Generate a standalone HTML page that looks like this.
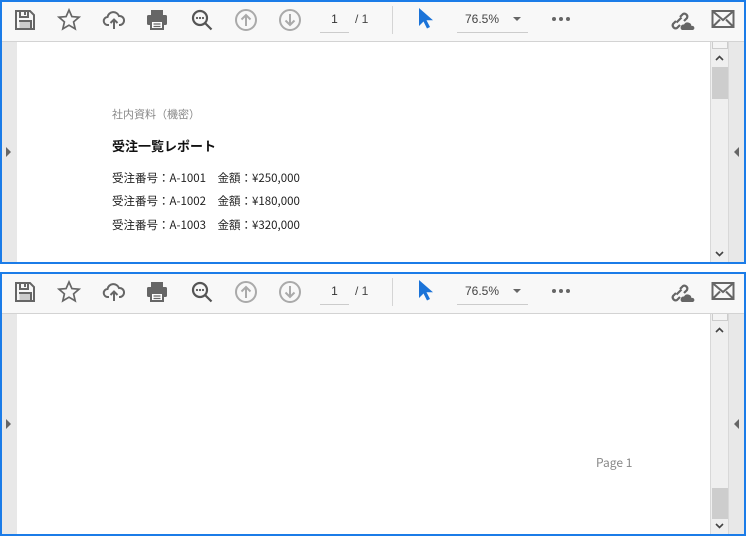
<!DOCTYPE html>
<html><head><meta charset="utf-8"><style>
*{margin:0;padding:0;box-sizing:border-box}
body{width:746px;height:536px;background:#fff;position:relative;overflow:hidden;font-family:"Liberation Sans","Noto Sans CJK JP",sans-serif}
.pane{position:absolute;left:0;width:746px;border:2px solid #1b7ce8;background:#fff;overflow:hidden}
.tb{position:absolute;left:0;top:0;width:742px;height:40px;background:#f8f8f8;border-bottom:1px solid #d3d3d3}
.ic{position:absolute;top:6px}
.lg{position:absolute;left:0;top:40px;width:15px;bottom:0;background:#e8e8e8}
.rg{position:absolute;right:0;top:40px;width:15px;bottom:0;background:#e8e8e8}
.sb{position:absolute;right:15px;top:40px;width:19px;bottom:0;background:#efefef;border-left:1px solid #d8d8d8;border-right:1px solid #d8d8d8}
.tri{position:absolute;width:0;height:0;border-top:5px solid transparent;border-bottom:5px solid transparent}
.t{position:absolute;font-size:11.5px;color:#222;white-space:nowrap;font-family:"Noto Sans CJK JP","Liberation Sans",sans-serif}
.ar{position:absolute;left:4px}
.dots span{position:absolute;top:0;width:4px;height:4px;border-radius:50%;background:#666}
</style></head><body>

<div class="pane" style="top:0;height:264px">
 <div class="tb">
  <svg class="ic" style="left:11px" width="24" height="24" viewBox="0 0 24 24" fill="none" stroke="#666" stroke-width="2"><path d="M3 3h14l4 4v14H3z"/><path d="M7 3v6h8V3M12 4v3"/><rect x="6.5" y="14" width="11" height="6" fill="#ccc" stroke="none"/><path d="M6 13h12v8"/></svg>
  <svg class="ic" style="left:55px" width="24" height="24" viewBox="0 0 24 24" fill="none" stroke="#666" stroke-width="1.7"><path d="M12 2l2.9 6.6 7.1.6-5.4 4.7 1.6 7-6.2-3.7-6.2 3.7 1.6-7L2 9.2l7.1-.6z"/></svg>
  <svg class="ic" style="left:100px" width="24" height="24" viewBox="0 0 24 24" fill="none" stroke="#666" stroke-width="2"><path d="M7 17H6a4 4 0 0 1-.5-8A6 6 0 0 1 17 8a4.5 4.5 0 0 1 1 9h-1"/><path d="M12 21v-9M8.5 15l3.5-3.5 3.5 3.5"/></svg>
  <svg class="ic" style="left:143px" width="24" height="24" viewBox="0 0 24 24"><rect x="6" y="2" width="12" height="5" fill="#666"/><rect x="2" y="7" width="20" height="10" rx="1.5" fill="#666"/><rect x="6" y="13" width="12" height="8" fill="#fff" stroke="#666" stroke-width="2"/><path d="M8.5 16h7M8.5 18.5h7" stroke="#666" stroke-width="1.3"/></svg>
  <svg class="ic" style="left:188px" width="24" height="24" viewBox="0 0 24 24" fill="none" stroke="#555" stroke-width="2.2"><circle cx="10" cy="10" r="7"/><path d="M15 15l6.5 6.5"/><g fill="#555" stroke="none"><circle cx="7" cy="10" r="1.1"/><circle cx="10" cy="10" r="1.1"/><circle cx="13" cy="10" r="1.1"/></g></svg>
  <svg class="ic" style="left:232px" width="24" height="24" viewBox="0 0 24 24" fill="none" stroke="#aaa" stroke-width="2"><circle cx="12" cy="12" r="10"/><path d="M12 18V7M7.5 11.5 12 7l4.5 4.5"/></svg>
  <svg class="ic" style="left:276px" width="24" height="24" viewBox="0 0 24 24" fill="none" stroke="#aaa" stroke-width="2"><circle cx="12" cy="12" r="10"/><path d="M12 6v11M7.5 12.5 12 17l4.5-4.5"/></svg>
  <div style="position:absolute;left:318px;top:8px;width:29px;height:23px;border-bottom:1px solid #ccc;text-align:center;font-size:12px;color:#333;line-height:18px">1</div>
  <div style="position:absolute;left:353px;top:8px;font-size:12px;color:#444;line-height:18px">/ 1</div>
  <div style="position:absolute;left:390px;top:4px;width:1px;height:28px;background:#d5d5d5"></div>
  <svg class="ic" style="left:415px;top:5px" width="18" height="24" viewBox="0 0 18 24"><path d="M2 1v18l4.5-4.5 3.5 7 3-1.5-3.5-6.8H16z" fill="#1b73d8"/></svg>
  <div style="position:absolute;left:455px;top:8px;width:71px;height:23px;border-bottom:1px solid #ccc;font-size:12px;color:#444;line-height:18px;padding-left:8px">76.5%</div>
  <div style="position:absolute;left:511px;top:15px;border-left:4px solid transparent;border-right:4px solid transparent;border-top:4px solid #666"></div>
  <div class="dots" style="position:absolute;left:550px;top:15px;width:20px;height:4px"><span style="left:0"></span><span style="left:7px"></span><span style="left:14px"></span></div>
  <svg class="ic" style="left:665px" width="28" height="24" viewBox="0 0 28 24" fill="none" stroke="#666" stroke-width="2.2"><path d="M9 13l-3 3a3 3 0 0 0 4 4l3-3M13 9l3-3a3 3 0 0 1 4 4l-3 3M9.5 14.5l5-5"/><path d="M15 22a3 3 0 0 1 2-5.5 4 4 0 0 1 7.5 1.5A2 2 0 0 1 26 22z" fill="#666" stroke="none"/></svg>
  <svg class="ic" style="left:709px;top:7px" width="24" height="20" viewBox="0 0 24 20" fill="none" stroke="#666" stroke-width="2"><rect x="1.5" y="2" width="21" height="16"/><path d="M1.5 2 12 11 22.5 2M1.5 18 9 10.5M22.5 18 15 10.5"/></svg>
 </div>
 <div class="lg"><div class="tri" style="left:4px;top:105px;border-left:5px solid #666"></div></div>
 <div class="sb"><div style="position:absolute;left:1px;top:0;width:16px;height:7px;background:#f4f4f4;border:1px solid #ccc;border-top:0"></div>
  <svg class="ar" style="top:13px" width="9" height="6" viewBox="0 0 9 6"><path d="M1 5 4.5 1.5 8 5" fill="none" stroke="#444" stroke-width="1.6"/></svg>
  <div style="position:absolute;left:1px;top:25px;width:16px;height:32px;background:#cdcdcd"></div>
  <svg class="ar" style="bottom:5px" width="9" height="6" viewBox="0 0 9 6"><path d="M1 1 4.5 4.5 8 1" fill="none" stroke="#444" stroke-width="1.6"/></svg></div>
 <div class="rg"><div class="tri" style="left:5px;top:105px;border-right:5px solid #666"></div></div>
 <div class="t" style="left:110px;top:104px;font-size:11px;color:#888">社内資料（機密）</div>
 <div class="t" style="left:110px;top:134px;font-size:13px;font-weight:bold;color:#111">受注一覧レポート</div>
 <div class="t" style="left:110px;top:168px">受注番号：A-1001　金額：¥250,000</div>
 <div class="t" style="left:110px;top:191px">受注番号：A-1002　金額：¥180,000</div>
 <div class="t" style="left:110px;top:215px">受注番号：A-1003　金額：¥320,000</div>
</div>

<div class="pane" style="top:272px;height:264px">
 <div class="tb">
  <svg class="ic" style="left:11px" width="24" height="24" viewBox="0 0 24 24" fill="none" stroke="#666" stroke-width="2"><path d="M3 3h14l4 4v14H3z"/><path d="M7 3v6h8V3M12 4v3"/><rect x="6.5" y="14" width="11" height="6" fill="#ccc" stroke="none"/><path d="M6 13h12v8"/></svg>
  <svg class="ic" style="left:55px" width="24" height="24" viewBox="0 0 24 24" fill="none" stroke="#666" stroke-width="1.7"><path d="M12 2l2.9 6.6 7.1.6-5.4 4.7 1.6 7-6.2-3.7-6.2 3.7 1.6-7L2 9.2l7.1-.6z"/></svg>
  <svg class="ic" style="left:100px" width="24" height="24" viewBox="0 0 24 24" fill="none" stroke="#666" stroke-width="2"><path d="M7 17H6a4 4 0 0 1-.5-8A6 6 0 0 1 17 8a4.5 4.5 0 0 1 1 9h-1"/><path d="M12 21v-9M8.5 15l3.5-3.5 3.5 3.5"/></svg>
  <svg class="ic" style="left:143px" width="24" height="24" viewBox="0 0 24 24"><rect x="6" y="2" width="12" height="5" fill="#666"/><rect x="2" y="7" width="20" height="10" rx="1.5" fill="#666"/><rect x="6" y="13" width="12" height="8" fill="#fff" stroke="#666" stroke-width="2"/><path d="M8.5 16h7M8.5 18.5h7" stroke="#666" stroke-width="1.3"/></svg>
  <svg class="ic" style="left:188px" width="24" height="24" viewBox="0 0 24 24" fill="none" stroke="#555" stroke-width="2.2"><circle cx="10" cy="10" r="7"/><path d="M15 15l6.5 6.5"/><g fill="#555" stroke="none"><circle cx="7" cy="10" r="1.1"/><circle cx="10" cy="10" r="1.1"/><circle cx="13" cy="10" r="1.1"/></g></svg>
  <svg class="ic" style="left:232px" width="24" height="24" viewBox="0 0 24 24" fill="none" stroke="#aaa" stroke-width="2"><circle cx="12" cy="12" r="10"/><path d="M12 18V7M7.5 11.5 12 7l4.5 4.5"/></svg>
  <svg class="ic" style="left:276px" width="24" height="24" viewBox="0 0 24 24" fill="none" stroke="#aaa" stroke-width="2"><circle cx="12" cy="12" r="10"/><path d="M12 6v11M7.5 12.5 12 17l4.5-4.5"/></svg>
  <div style="position:absolute;left:318px;top:8px;width:29px;height:23px;border-bottom:1px solid #ccc;text-align:center;font-size:12px;color:#333;line-height:18px">1</div>
  <div style="position:absolute;left:353px;top:8px;font-size:12px;color:#444;line-height:18px">/ 1</div>
  <div style="position:absolute;left:390px;top:4px;width:1px;height:28px;background:#d5d5d5"></div>
  <svg class="ic" style="left:415px;top:5px" width="18" height="24" viewBox="0 0 18 24"><path d="M2 1v18l4.5-4.5 3.5 7 3-1.5-3.5-6.8H16z" fill="#1b73d8"/></svg>
  <div style="position:absolute;left:455px;top:8px;width:71px;height:23px;border-bottom:1px solid #ccc;font-size:12px;color:#444;line-height:18px;padding-left:8px">76.5%</div>
  <div style="position:absolute;left:511px;top:15px;border-left:4px solid transparent;border-right:4px solid transparent;border-top:4px solid #666"></div>
  <div class="dots" style="position:absolute;left:550px;top:15px;width:20px;height:4px"><span style="left:0"></span><span style="left:7px"></span><span style="left:14px"></span></div>
  <svg class="ic" style="left:665px" width="28" height="24" viewBox="0 0 28 24" fill="none" stroke="#666" stroke-width="2.2"><path d="M9 13l-3 3a3 3 0 0 0 4 4l3-3M13 9l3-3a3 3 0 0 1 4 4l-3 3M9.5 14.5l5-5"/><path d="M15 22a3 3 0 0 1 2-5.5 4 4 0 0 1 7.5 1.5A2 2 0 0 1 26 22z" fill="#666" stroke="none"/></svg>
  <svg class="ic" style="left:709px;top:7px" width="24" height="20" viewBox="0 0 24 20" fill="none" stroke="#666" stroke-width="2"><rect x="1.5" y="2" width="21" height="16"/><path d="M1.5 2 12 11 22.5 2M1.5 18 9 10.5M22.5 18 15 10.5"/></svg>
 </div>
 <div class="lg"><div class="tri" style="left:4px;top:105px;border-left:5px solid #666"></div></div>
 <div class="sb"><div style="position:absolute;left:1px;top:0;width:16px;height:7px;background:#f4f4f4;border:1px solid #ccc;border-top:0"></div>
  <svg class="ar" style="top:13px" width="9" height="6" viewBox="0 0 9 6"><path d="M1 5 4.5 1.5 8 5" fill="none" stroke="#444" stroke-width="1.6"/></svg>
  <div style="position:absolute;left:1px;top:174px;width:16px;height:31px;background:#cdcdcd"></div>
  <svg class="ar" style="bottom:5px" width="9" height="6" viewBox="0 0 9 6"><path d="M1 1 4.5 4.5 8 1" fill="none" stroke="#444" stroke-width="1.6"/></svg></div>
 <div class="rg"><div class="tri" style="left:5px;top:105px;border-right:5px solid #666"></div></div>
 <div class="t" style="left:594px;top:180px;font-size:12px;color:#888">Page 1</div>
</div>
</body></html>
